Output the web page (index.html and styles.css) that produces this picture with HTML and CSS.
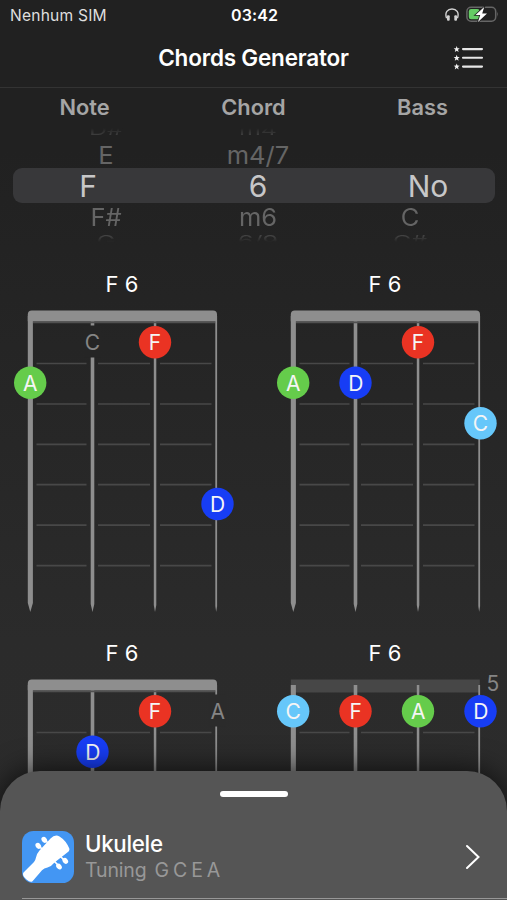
FILE: index.html
```html
<!DOCTYPE html>
<html lang="pt">
<head>
<meta charset="utf-8">
<meta name="viewport" content="width=device-width">
<title>Chords Generator</title>
<link rel="stylesheet" href="styles.css">
</head>
<body>
<svg class="defs" width="0" height="0" aria-hidden="true">
  <defs>
    <g id="frets">
      <g stroke="#484848" stroke-width="1.7">
        <path d="M36.500 59.500H86.500M98 59.500H150M160 59.500H211.500M36.500 100H86.500M98 100H150M160 100H211.500M36.500 140.300H86.500M98 140.300H150M160 140.300H211.500M36.500 180.700H86.500M98 180.700H150M160 180.700H211.500M36.500 221.200H86.500M98 221.200H150M160 221.200H211.500M36.500 261.700H86.500M98 261.700H150M160 261.700H211.500"/>
      </g>
    </g>
    <g id="strings" fill="#8e8e8e">
      <path d="M27.800 12H32.900V299L30.300 308L27.800 299Z"/>
      <path d="M90.700 12H94.300V300L92.500 308L90.700 300Z"/>
      <path d="M153.800 12H156.300V301L155 308L153.800 301Z"/>
      <path d="M215.300 12H217.100V302L216.200 308L215.300 302Z"/>
    </g>
    <g id="nut">
      <path d="M33 18.200H215" stroke="#505050" stroke-width="2"/>
      <path d="M27.800 17.200V10.500Q27.800 6.500 31.800 6.500H213Q217 6.500 217 10.500V17.200Z" fill="#8e8e8e"/>
    </g>
  </defs>
</svg>

<div class="app">
  <header class="status">
    <span class="carrier">Nenhum SIM</span>
    <span class="clock">03:42</span>
    <span class="indicators">
      <svg width="14" height="14" viewBox="0 0 14 14"><path d="M1.600 10.200C-.6 4.500 2.700 1 7 1S14.600 4.500 12.400 10.200" fill="none" stroke="#d2d2d2" stroke-width="1.400"/><rect x="2" y="7.300" width="2.700" height="5.400" rx="1" fill="#d2d2d2"/><rect x="9.300" y="7.300" width="2.700" height="5.400" rx="1" fill="#d2d2d2"/></svg>
      <svg width="33" height="17" viewBox="0 0 33 17"><rect x=".9" y="1.200" width="28.800" height="14" rx="4.200" fill="none" stroke="#666" stroke-width="1.500"/><path d="M31.200 5.700Q33 8.200 31.200 10.700Z" fill="#666"/><rect x="2.800" y="3.100" width="10.800" height="10.200" rx="2.300" fill="#65cc65"/><path d="M18.200 1L9.500 9H14.200L12 15.900L21 7.500H16.200Z" fill="#fff" stroke="#222" stroke-width="1.600" paint-order="stroke"/></svg>
    </span>
  </header>

  <nav class="navbar">
    <h1>Chords Generator</h1>
    <svg class="list-icon" width="30" height="26" viewBox="0 0 30 26">
      <path d="M9 4.100H28M9 12.800H28M9 21.600H28" stroke="#e6e6e6" stroke-width="2.100" stroke-linecap="round"/>
      <g fill="#f2f2f2"><path id="star" d="M2.700 1L3.500 3.200L5.700 3.300L4 4.700L4.600 7L2.700 5.700L.8 7L1.400 4.700L-.3 3.300L1.900 3.200Z"/><use href="#star" y="8.700"/><use href="#star" y="17.400"/></g>
    </svg>
  </nav>

  <div class="headings"><span>Note</span><span>Chord</span><span>Bass</span></div>

  <div class="picker">
    <div class="row far top"><span>D#</span><span>m4</span><span></span></div>
    <div class="row near"><span>E</span><span>m4/7</span><span></span></div>
    <div class="row selected"><span>F</span><span>6</span><span>No</span></div>
    <div class="row near"><span>F#</span><span>m6</span><span>C</span></div>
    <div class="row far bottom"><span>G</span><span>6/9</span><span>C#</span></div>
  </div>

  <main class="chords">
    <section class="chord">
      <h2>F 6</h2>
      <svg width="244" height="310" viewBox="0 0 244 310">
        <use href="#frets"/><use href="#strings"/><use href="#nut"/>
        <rect x="84" y="21.500" width="17" height="32" fill="#252525"/>
        <g class="open"><text x="92.500" y="46">C</text></g>
        <g class="note"><circle class="red" cx="155" cy="38.300" r="16.200"/><text x="155" y="46">F</text>
        <circle class="green" cx="30.200" cy="78.800" r="16.200"/><text x="30.200" y="86.500">A</text>
        <circle class="blue" cx="217.500" cy="200" r="16.200"/><text x="217.700" y="207.700">D</text></g>
      </svg>
    </section>
    <section class="chord">
      <h2>F 6</h2>
      <svg width="244" height="310" viewBox="0 0 244 310">
        <use href="#frets"/><use href="#strings"/><use href="#nut"/>
        <g class="note"><circle class="red" cx="155" cy="38.300" r="16.200"/><text x="155" y="46">F</text>
        <circle class="green" cx="30.200" cy="78.800" r="16.200"/><text x="30.200" y="86.500">A</text>
        <circle class="blue" cx="92.500" cy="78.800" r="16.200"/><text x="92.900" y="86.500">D</text>
        <circle class="cyan" cx="217.500" cy="119.200" r="16.200"/><text x="217.500" y="126.900">C</text></g>
      </svg>
    </section>
    <section class="chord">
      <h2>F 6</h2>
      <svg width="244" height="310" viewBox="0 0 244 310">
        <use href="#frets"/><use href="#strings"/><use href="#nut"/>
        <rect x="209" y="21.500" width="17" height="32" fill="#2b2b2b"/>
        <g class="open"><text x="217.700" y="46">A</text></g>
        <g class="note"><circle class="red" cx="155" cy="38.300" r="16.200"/><text x="155" y="46">F</text>
        <circle class="blue" cx="92.500" cy="78.800" r="16.200"/><text x="92.900" y="86.500">D</text></g>
      </svg>
    </section>
    <section class="chord">
      <h2>F 6</h2>
      <svg width="244" height="310" viewBox="0 0 244 310">
        <rect x="27.800" y="6.500" width="189" height="13" fill="#474747"/>
        <use href="#frets"/><use href="#strings"/>
        <g class="open"><text x="230" y="18.200">5</text></g>
        <g class="note"><circle class="cyan" cx="30.200" cy="38.300" r="16.200"/><text x="30.200" y="46">C</text>
        <circle class="red" cx="92.500" cy="38.300" r="16.200"/><text x="92.700" y="46">F</text>
        <circle class="green" cx="155" cy="38.300" r="16.200"/><text x="155.200" y="46">A</text>
        <circle class="blue" cx="217.500" cy="38.300" r="16.200"/><text x="217.900" y="46">D</text></g>
      </svg>
    </section>
  </main>

  <aside class="sheet">
    <div class="grabber"></div>
    <div class="instrument">
      <svg width="52" height="52" viewBox="0 0 52 52">
        <rect width="52" height="52" rx="11.500" fill="#4396f3"/>
        <path d="M1.500 41.500L12 31Q13.500 29 14 26.500Q14.800 22.500 17.500 19.500L28.500 7.500Q33 3 37.500 5.500Q44 9.500 47.300 17.500Q47.800 19 46.600 20.400L32.500 31.500Q29.500 35.300 25.500 36.600Q22 37.400 20 39.200L10.500 50.300Q8.500 52 4.500 48.500Q-.3 44.500 1.500 41.500Z" fill="#fff"/>
        <path d="M16.500 14.500L21 19M22.500 8.500L27 13M38 25L43 30M32 30L37 35" stroke="#fff" stroke-width="1.700"/>
        <g fill="#fff"><ellipse cx="16.300" cy="14.800" rx="2.500" ry="3.200" transform="rotate(-40 16.300 14.800)"/><ellipse cx="22.300" cy="8.800" rx="2.500" ry="3.200" transform="rotate(-40 22.300 8.800)"/><ellipse cx="43.300" cy="29.800" rx="2.500" ry="3.200" transform="rotate(-40 43.300 29.800)"/><ellipse cx="37" cy="35.500" rx="2.500" ry="3.200" transform="rotate(-40 37 35.500)"/></g>
      </svg>
      <div class="label"><div class="name">Ukulele</div><div class="tuning">Tuning&nbsp; G C E A</div></div>
      <svg class="chevron" width="16" height="26" viewBox="0 0 16 26"><path d="M2 2L13.500 13L2 24" fill="none" stroke="#fff" stroke-width="2" stroke-linecap="round"/></svg>
    </div>
  </aside>
</div>
</body>
</html>
```
FILE: styles.css
```css
* { box-sizing: border-box; }
body { margin: 0; background: #212121; font-family: Inter, "Liberation Sans", sans-serif; }
.defs { display: none; }
.app {
  position: relative; width: 507px; height: 900px; overflow: hidden;
  display: flex; flex-direction: column;
  background: linear-gradient(#212121 0, #212121 150px, #2b2b2b 640px, #2c2c2c 900px);
  color: #fff;
}
.status { display: grid; grid-template-columns: 1fr auto 1fr; align-items: center; flex: none; height: 30px; padding: 0 8px 0 10px; font-size: 15.600px; }
.carrier { color: #dedede; letter-spacing: .2px; }
.clock { font-weight: 600; font-size: 16px; letter-spacing: .1px; }
.indicators { display: flex; justify-content: flex-end; align-items: center; gap: 7px; }
.indicators svg { display: block; margin-top: -1px; }
.navbar { display: grid; grid-template-columns: 1fr auto 1fr; align-items: center; flex: none; height: 58px; padding: 0 23px 2px; border-bottom: 1px solid #333; }
.navbar h1 { grid-column: 2; margin: 0; font-size: 22.500px; font-weight: 600; letter-spacing: -.2px; }
.list-icon { justify-self: end; overflow: visible; }
.headings { display: grid; grid-template-columns: repeat(3, 169px); flex: none; height: 40px; line-height: 39px; text-align: center; color: #a5a5a5; font-size: 21.800px; font-weight: 600; }

.picker { flex: none; height: 115px; display: flex; flex-direction: column; align-items: center; }
.row { display: grid; grid-template-columns: repeat(3, 152px); align-items: center; justify-content: center; width: 482px; text-align: center; flex: none; padding-left: 9px; }
.near { height: 28px; font-size: 25.500px; line-height: 28px; color: #656565; }
.near span { transform: scaleY(.95); }
.top + .near span { transform: translateY(1px) scaleY(.95); }
.selected { grid-template-columns: repeat(3, 170px); height: 35px; line-height: 37px; background: #38383a; border-radius: 9px; font-size: 30px; color: #c7c7c8; }
.far { overflow: hidden; color: #424242; font-size: 25px; line-height: 20px; }
.far span { height: 20px; transform: scaleY(.6); }
.far.top { height: 8px; margin-bottom: 4px; align-content: end; -webkit-mask-image: linear-gradient(transparent, #000); mask-image: linear-gradient(transparent, #000); }
.far.top span { margin-bottom: -4px; }
.far.bottom { height: 11px; align-items: start; -webkit-mask-image: linear-gradient(#000 45%, transparent); mask-image: linear-gradient(#000 45%, transparent); }

.chords { display: grid; grid-template-columns: 244px 244px; column-gap: 19px; row-gap: 19px; flex: none; padding-top: 21px; }
.chord { height: 350px; }
.chord h2 { margin: 0; height: 40px; line-height: 40px; text-align: center; font-size: 22px; font-weight: 400; }
.chord svg { display: block; overflow: visible; }
.chord text { text-anchor: middle; font-size: 21px; }
.note text { fill: #f5f5f5; }
.open text { fill: #858585; }
.red { fill: #ea3323; }
.green { fill: #65cc4b; }
.blue { fill: #173df5; }
.cyan { fill: #66c7fa; }

.sheet {
  position: absolute; left: 0; right: 0; bottom: 0; height: 129.500px;
  border-radius: 40px 40px 0 0; background: #555;
  box-shadow: 0 0 30px rgba(0, 0, 0, .75);
  padding-top: 20px; padding-left: 22px;
}
.grabber { width: 68px; height: 6px; margin-left: 198px; border-radius: 3px; background: #fff; }
.instrument { display: flex; align-items: center; height: 102px; padding: 20px 26px 0 0; border-bottom: 1.500px solid #979797; }
.label { margin-left: 11px; }
.name { font-size: 22.300px; line-height: 26px; font-weight: 500; letter-spacing: -.3px; }
.tuning { font-size: 19.500px; line-height: 26px; color: #989898; letter-spacing: -.15px; word-spacing: -1.300px; }
.chevron { margin-left: auto; }
```
